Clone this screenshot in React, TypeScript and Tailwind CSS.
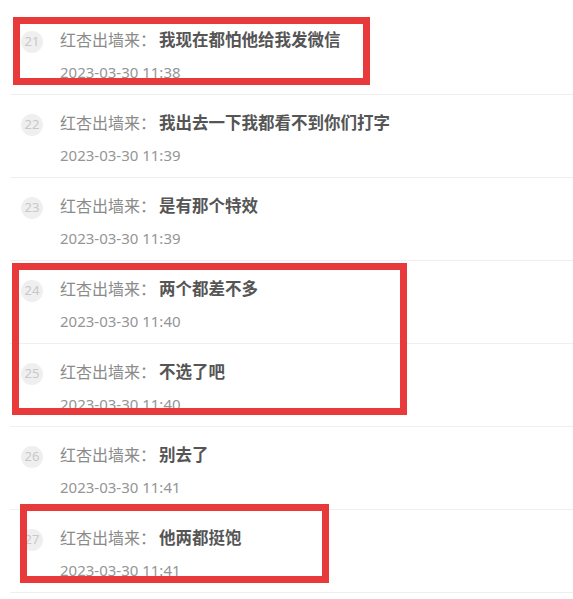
const ITEMS = [
  { n: 21, text: '我现在都怕他给我发微信', time: '2023-03-30 11:38' },
  { n: 22, text: '我出去一下我都看不到你们打字', time: '2023-03-30 11:39' },
  { n: 23, text: '是有那个特效', time: '2023-03-30 11:39' },
  { n: 24, text: '两个都差不多', time: '2023-03-30 11:40' },
  { n: 25, text: '不选了吧', time: '2023-03-30 11:40' },
  { n: 26, text: '别去了', time: '2023-03-30 11:41' },
  { n: 27, text: '他两都挺饱', time: '2023-03-30 11:41' },
]

// highlight boxes drawn over the list, in page pixels
const MARKS = [
  { left: 13, top: 17, width: 357, height: 68 },
  { left: 12, top: 263, width: 395, height: 152 },
  { left: 20, top: 504, width: 309, height: 79 },
]

function Row({ n, text, time }: { n: number; text: string; time: string }) {
  return (
    <div className="flex h-[83px] border-b border-[#efefef] pl-[11px] pt-[18px]">
      <div className="mt-[1px] flex h-[22px] w-[22px] shrink-0 items-center justify-center rounded-full bg-[#efefef] text-[13px] text-[#c8c8c8]">
        {n}
      </div>
      <div className="ml-[17px] flex flex-col">
        <p className="text-[16px] leading-[20px] text-[#8a8a8a]">
          红杏出墙来：<span className="ml-[3px] text-[16.5px] font-bold text-[#555]">{text}</span>
        </p>
        <p className="mt-[12px] text-[15px] leading-[20px] text-[#959595]">{time}</p>
      </div>
    </div>
  )
}

export default function App() {
  return (
    <div
      className="relative h-[599px] w-[573px] overflow-hidden bg-white pl-[10px] pt-[12px]"
      style={{ fontFamily: '"Noto Sans", "Noto Sans CJK SC", sans-serif' }}
    >
      {ITEMS.map((it) => (
        <Row key={it.n} {...it} />
      ))}
      {MARKS.map((m, i) => (
        <div
          key={i}
          className="absolute border-[7px] border-[#e8393b]"
          style={{ left: m.left, top: m.top, width: m.width, height: m.height }}
        />
      ))}
    </div>
  )
}
